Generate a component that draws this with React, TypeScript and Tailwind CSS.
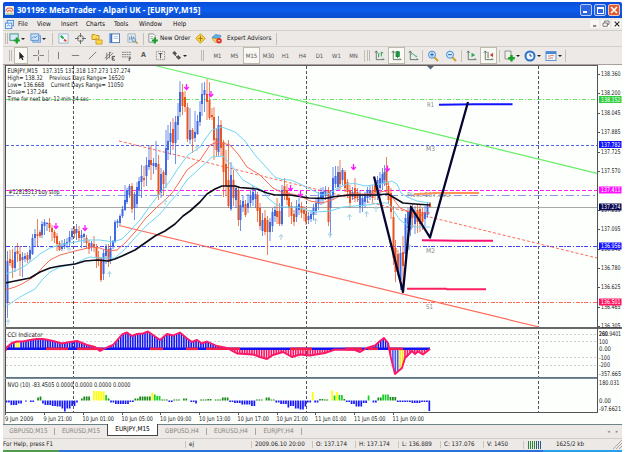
import React from "react";

type Candle = [number, number, number, number, number, number];

// x, high, low, body top, body bottom, 1 = bullish
const candles: Candle[] = [
  [7.5, 251, 318, 261, 303, 1], [10, 250, 266, 259, 263, 0], [12.5, 249, 278, 260, 268, 0], [15, 246, 272, 252, 268, 1],
  [17.5, 243, 262, 251, 254, 0], [20, 246, 276, 254, 261, 0], [22.5, 252, 277, 257, 260, 1], [25, 253, 262, 256, 259, 1],
  [27.5, 252, 263, 255, 260, 0], [30, 247, 262, 250, 259, 1], [32.5, 234, 255, 238, 254, 1], [35, 229, 246, 234, 238, 1],
  [37.5, 219, 246, 234, 236, 0], [40, 230, 238, 232, 236, 0], [42, 221, 238, 224, 235, 1], [44.5, 219, 235, 222, 226, 1],
  [47, 222, 231, 223, 224, 1], [49.5, 218, 232, 223, 228, 0], [52, 225, 241, 228, 232, 0], [54.5, 230, 243, 232, 238, 0],
  [57, 233, 251, 236, 244, 0], [59.5, 241, 251, 243, 250, 0], [62, 240, 251, 246, 249, 1], [64.5, 239, 249, 243, 247, 1],
  [67, 238, 248, 242, 244, 1], [69.5, 231, 246, 237, 242, 1], [72, 228, 240, 231, 237, 1], [74.5, 226, 238, 229, 234, 0],
  [76.5, 224, 240, 229, 233, 1], [79, 226, 241, 231, 238, 0], [81.5, 230, 248, 235, 238, 1], [84, 233, 243, 234, 237, 1],
  [86.5, 235, 249, 238, 243, 0], [89, 240, 254, 243, 249, 0], [91.5, 241, 251, 243, 247, 1], [94, 236, 252, 244, 247, 0],
  [96.5, 244, 268, 247, 258, 0], [98.5, 251, 266, 257, 260, 0], [101, 257, 282, 258, 280, 0], [103.5, 249, 280, 253, 274, 1],
  [106, 244, 264, 247, 256, 1], [108.5, 244, 267, 249, 262, 0], [110.5, 236, 264, 248, 261, 1], [113, 240, 249, 241, 247, 1],
  [115, 220, 243, 222, 242, 1], [117.5, 219, 228, 221, 223, 1], [120, 214, 225, 216, 223, 1], [122.5, 206, 218, 209, 216, 1],
  [125, 185, 211, 200, 210, 1], [127, 188, 204, 190, 202, 1], [129.5, 184, 198, 186, 195, 1], [132, 183, 213, 186, 209, 0],
  [134.5, 192, 220, 194, 208, 1], [137, 182, 208, 187, 204, 1], [139, 177, 196, 181, 190, 1], [141.5, 165, 198, 176, 182, 1],
  [144, 166, 187, 178, 180, 0], [146.5, 157, 186, 165, 176, 1], [149, 145, 170, 160, 167, 1], [151, 145, 180, 160, 165, 0],
  [153.5, 158, 174, 163, 166, 1], [156, 141, 170, 163, 167, 1], [158.5, 155, 200, 164, 195, 0], [161, 168, 198, 174, 193, 1],
  [163.5, 170, 196, 172, 184, 0], [166, 130, 188, 148, 175, 1], [168, 125, 160, 141, 150, 1], [170.5, 122, 155, 133, 142, 1],
  [173, 118, 150, 129, 143, 0], [175.5, 116, 164, 122, 143, 1], [178, 103, 140, 116, 125, 1], [180, 81, 117, 92, 112, 1],
  [182.5, 84, 115, 92, 106, 0], [185, 91, 112, 97, 107, 0], [187.5, 103, 142, 107, 139, 0], [190, 108, 144, 130, 140, 1],
  [192.5, 128, 153, 130, 139, 0], [195, 111, 142, 132, 138, 1], [197.5, 115, 135, 121, 134, 1], [200, 101, 126, 112, 122, 1],
  [202, 83, 116, 94, 104, 1], [204.5, 82, 112, 90, 95, 1], [207, 79, 120, 94, 102, 0], [209.5, 82, 120, 100, 118, 0],
  [212, 108, 120, 115, 117, 0], [214, 107, 160, 117, 140, 0], [216.5, 128, 157, 138, 150, 0], [218.5, 116, 156, 125, 152, 1],
  [221, 120, 156, 125, 148, 0], [223.5, 140, 197, 142, 172, 0], [226, 150, 196, 164, 186, 0], [228.5, 140, 208, 180, 206, 0],
  [231, 162, 211, 175, 209, 1], [233.5, 170, 206, 180, 198, 0], [236, 185, 208, 188, 200, 1], [238.5, 186, 226, 190, 220, 0],
  [240.5, 200, 231, 205, 220, 1], [243, 195, 212, 201, 207, 1], [245.5, 200, 217, 204, 215, 0], [248, 194, 213, 203, 208, 1],
  [250.5, 190, 207, 196, 203, 1], [253, 186, 206, 192, 200, 1], [255.5, 190, 208, 194, 199, 1], [257.5, 192, 222, 195, 211, 0],
  [260, 203, 230, 208, 226, 0], [262.5, 213, 236, 220, 231, 1], [265, 210, 235, 218, 232, 0], [267.5, 216, 255, 220, 232, 0],
  [270, 218, 241, 222, 232, 1], [272.5, 208, 232, 212, 226, 1], [275, 206, 222, 210, 216, 1], [277, 198, 224, 211, 217, 0],
  [279.5, 203, 226, 211, 224, 0], [282, 185, 226, 190, 224, 1], [284.5, 178, 200, 186, 196, 0], [287, 184, 205, 190, 200, 0],
  [289, 192, 217, 198, 208, 0], [291.5, 202, 224, 206, 216, 0], [294, 210, 226, 214, 222, 0], [296.5, 200, 222, 206, 217, 1],
  [299, 198, 215, 204, 210, 1], [301.5, 202, 218, 206, 213, 0], [304, 206, 221, 210, 214, 0], [306, 208, 225, 214, 222, 0],
  [308.5, 212, 224, 216, 220, 1], [311, 210, 222, 214, 219, 1], [313.5, 204, 220, 208, 215, 1], [316, 198, 215, 203, 211, 1],
  [318.5, 192, 210, 197, 204, 1], [321, 188, 205, 192, 198, 1], [323, 187, 204, 192, 199, 1], [325.5, 186, 200, 191, 196, 1],
  [328.5, 187, 226, 190, 222, 0], [330.5, 190, 236, 196, 208, 1], [333, 167, 200, 178, 195, 1], [335.5, 166, 188, 176, 184, 1],
  [338, 166, 190, 172, 187, 1], [340, 160, 190, 172, 184, 0], [342.5, 168, 185, 170, 180, 1], [345, 170, 192, 172, 188, 0],
  [347.5, 179, 198, 182, 192, 0], [350, 185, 208, 190, 203, 0], [352.5, 187, 200, 192, 197, 1], [355, 178, 202, 188, 198, 0],
  [357.5, 188, 202, 192, 198, 0], [360, 190, 213, 194, 207, 1], [362.5, 196, 212, 198, 206, 1], [365, 192, 208, 196, 202, 1],
  [367.5, 187, 203, 190, 198, 1], [370, 186, 200, 190, 197, 1], [372.5, 185, 202, 190, 198, 0], [375, 180, 200, 184, 192, 0],
  [377.5, 176, 200, 180, 195, 1], [380, 172, 195, 178, 188, 1], [382.5, 168, 190, 174, 184, 1], [384.5, 165, 186, 172, 180, 1],
  [386.5, 157, 192, 170, 185, 0], [388.5, 182, 204, 186, 200, 0], [391, 188, 219, 193, 212, 0], [393.5, 206, 265, 217, 258, 0],
  [395.5, 240, 282, 248, 272, 0], [398, 250, 276, 254, 270, 0], [400.5, 246, 290, 253, 280, 1], [403, 236, 286, 252, 266, 0],
  [405.5, 214, 262, 218, 254, 1], [408, 208, 250, 212, 228, 1], [410.5, 205, 236, 212, 230, 1], [412.5, 204, 228, 210, 218, 0],
  [415, 206, 234, 213, 224, 1], [417.5, 204, 233, 210, 222, 0], [420, 204, 232, 209, 224, 0], [422.5, 208, 230, 212, 222, 0],
  [425, 206, 226, 212, 219, 1], [427.5, 202, 218, 206, 215, 1], [430, 202, 208, 203, 207, 0],
];

const levels = [
  { y: 99.5, color: "#62e862", dash: "4 2 1 2" },
  { y: 145.5, color: "#5068e8", dash: "3 2" },
  { y: 190.5, color: "#ff20f0", dash: "4 2" },
  { y: 195.5, color: "#8898e8", dash: "8 3 2 3" },
  { y: 246.5, color: "#4444f4", dash: "4 1.5 1.5 1.5" },
  { y: 302.5, color: "#ff6a5a", dash: "4 1.5 1.5 1.5" },
];

const prices: [string, number][] = [
  ["138.360", 74], ["138.200", 93], ["138.045", 113], ["137.885", 132], ["137.725", 151.5], ["137.570", 171],
  ["137.255", 210], ["137.095", 229], ["136.940", 249], ["136.780", 268], ["136.625", 287], ["136.465", 306.5], ["136.305", 326],
];

const tags: [string, number, string][] = [
  ["138.152", 99.5, "#30d040"], ["137.782", 144.5, "#1414ff"], ["137.411", 190, "#ff10ff"],
  ["137.274", 207, "#080850"], ["136.956", 246, "#1414ff"], ["136.501", 302, "#ff1464"],
];

const times: [string, number][] = [
  ["9 Jun 2009", 5], ["9 Jun 21:00", 43.5], ["10 Jun 01:00", 82.5], ["10 Jun 05:00", 121.5], ["10 Jun 09:00", 160],
  ["10 Jun 13:00", 199], ["10 Jun 17:00", 237.5], ["10 Jun 21:00", 276.5], ["11 Jun 01:00", 315], ["11 Jun 05:00", 354], ["11 Jun 09:00", 392.5],
];

const sells = [[56, 226], [85, 228], [186.5, 87], [211, 94], [290.5, 188], [300.5, 194], [353.5, 167], [387.5, 168.5]];
const buys = [[8, 322], [69, 250], [109.5, 274], [197, 148], [165, 202], [281, 237], [315.5, 221], [330, 235], [349.5, 217], [366.5, 214], [376, 209], [409.5, 247]];

const upperBand = "5,274 15,271 25,266 40,254 50,248 60,245 70,243 85,240 100,240 113,242 122,239 130,231 140,220 150,206 160,193 170,181 179,167 188,155 200,147 206,138 212,130 222,127 235,132 245,141 255,155 265,166 275,177 282,179.5 291,180 300,184 312,190 322,195 330,193 338,188 347,184 355,183.5 365,186 380,184 392,181 397,184 401,193 407,197 417,201 430,203";
const lowerBand = "5,307 20,297 35,289 42,280 50,272 60,267 75,264 84,259 90,257 100,258 115,258 125,249 133,240 147,225 160,214 170,202 178,193 187,180 200,168 212,157 223,156 233,167 243,180 257,188 262,190 268,198 275,204 283,207 297,207 310,211 317,212 330,211 343,207 367,205 380,203 388,203 393,210 400,220 407,225 417,227 430,227";
const midBand = "5,290 15,287 22,284 35,276 42,268 50,260 60,255 75,251 92,247 100,248 108,251 117,250 125,243 135,232 145,219 158,206 165,200 172,193 180,181 187,170 200,160 210,145 218,142 230,145 238,154 247,167 260,175 273,188 283,193 292,194 300,196 310,201 322,203 332,200 340,196 350,194 370,194 385,191 392,197 400,208 412,213 430,213";
const slowMa = "5,283 20,280 30,278 40,272 50,268 60,266 75,264 85,261 97,260 108,261 115,259 122,256 135,250 145,243 155,236 165,231 175,224 183,216 190,211 200,202 207,194 215,189 222,186 235,186 240,187.5 257,189 267,193 275,195 290,195 309,198 325,198.5 335,196.5 350,195 375,195 388,194 393,197 403,203 415,204 430,205";

const cci: [number, number][] = [
  [5.5, 351], [7, 347], [12, 343], [17, 341.5], [23, 341.5], [30, 340], [37, 339], [43, 339], [53, 341], [62, 343.5], [70, 342], [77, 341], [87, 345],
  [95, 347], [100, 351], [108, 347], [113, 345], [122, 334.5], [127, 332.5], [132, 336], [137, 334], [143, 333.5], [148, 331.5], [153, 335], [160, 340], [167, 334],
  [173, 335.5], [180, 332.5], [187, 338.5], [192, 342], [197, 340], [202, 343.5], [207, 341.5], [217, 346], [227, 348], [237, 353.5], [253, 354.5],
  [260, 357], [267, 359], [273, 355], [283, 352], [292, 357], [300, 354.5], [310, 355.5], [325, 353], [335, 349.5], [355, 350], [360, 352], [367, 348],
  [375, 345.5], [380, 341], [384, 338], [388, 343], [391, 358], [395, 374], [402, 368], [405, 358], [412, 351], [415, 354], [418, 351.5], [423, 354.5], [430, 349],
];

const nvo: [number, number, number][] = [
  [5, 11, -2], [11, 17, -4.5], [17, 23, -3], [24, 26, -1], [29, 34, -1.5], [36, 38, 3], [38, 41, 4], [42, 45, -3], [45, 50, -4.5], [50, 55, -5.5],
  [55, 60, -6], [60, 63, -8], [63, 65, -11], [65, 70, -8], [70, 75, -5.5], [75, 77, -2], [80, 82, 2], [83, 89, 4], [89, 91, 7.5], [94, 99, 9.5], [100, 104, 9],
  [104, 106, 5.5], [106, 110, 2], [110, 114, -2], [114, 130, -3.5], [130, 133, -1.5], [134, 138, 2], [138, 150, 4], [150, 153, 8], [153, 156, 6],
  [156, 160, 4.5], [161, 168, 1], [169, 173, -1.5], [174, 180, 1], [182, 188, 2], [190, 195, -1.5], [195, 198, -3], [199, 207, 1], [208, 211, 1.5],
  [215, 221, 1], [222, 228, 3], [229, 233, -1.5], [233, 240, -2.5], [240, 250, -4], [250, 256, -5.5], [257, 262, 1], [265, 269, 3], [270, 274, 1],
  [275, 280, -2], [280, 286, -3.5], [286, 290, -7], [290, 295, -5.5], [295, 300, -8], [300, 305, -9], [305, 307, -6], [308, 311, -2], [312, 314, 8.5],
  [315, 318, -2], [318, 323, 1.5], [325, 328, 1], [327, 329, 7], [330, 334, 10], [334, 336, 5], [337, 339, 8.5], [339, 342, 5.5], [342, 346, 1.5], [346, 351, -1.5],
  [351, 356, -3.5], [356, 361, -6], [362, 366, -2.5], [366, 368, 1.5], [368, 370, 5], [372, 376, -2], [378, 382, 3], [382, 390, 6], [390, 396, 3.5],
  [397, 412, -1.5], [412, 420, -2.5], [420, 427, -1.5], [429, 431, -10.5],
];

const band: [number, number][] = [[46, 68], [77, 103], [150, 163], [186, 198], [206, 240], [290, 312], [345, 362], [368, 378], [388, 403]];

const cciAt = (x: number) => {
  const i = Math.max(1, cci.findIndex(([px]) => px >= x));
  const [x0, y0] = cci[i - 1];
  const [x1, y1] = cci[i];
  return y0 + ((x - x0) / (x1 - x0)) * (y1 - y0);
};

const cciColor = (x: number, y: number) => {
  if (y < 349) return x > 15 && x < 19 ? "#ffff00" : "#1414f0";
  if (y > 360) return x > 399 && x < 403 ? "#ffee00" : "#4a5af0";
  return "#ff1464";
};

const nvoColor = (x: number, h: number) => {
  if (h < 0) return "#1818ff";
  if (h > 7) return "#ffff00";
  return h > 4.2 ? "#10d020" : "#188818";
};

const bars = Array.from({ length: 175 }, (_, i) => 6.5 + i * 2.43);

function Label({ x, y, w, fill = "#222222", children }: { x: number; y: number; w?: number; fill?: string; children: string }) {
  return (
    <text x={x} y={y} fill={fill} textLength={w} lengthAdjust="spacingAndGlyphs" xmlSpace="preserve" className="font-['DejaVu_Sans',sans-serif] text-[6.4px]">
      {children}
    </text>
  );
}

function Chart() {
  return (
    <svg viewBox="3 64 619 360" className="block h-[360px] w-[619px] shrink-0 bg-[#fdfffd]">
      <g shapeRendering="crispEdges">
        <path d="M3 64h2v360h-2z" fill="#c9c6c0" />
        <path d="M73.5 66V412M306.5 66V412M538.5 66V412" stroke="#4c5260" strokeDasharray="3 2" fill="none" />
        {levels.map((l) => (
          <path key={l.y} d={`M6 ${l.y}H597`} stroke={l.color} strokeDasharray={l.dash} />
        ))}
        <path d="M6 207.5H597" stroke="#a8a8a8" />
      </g>

      <Label x={427} y={106.5} w={7} fill="#8a8a8a">R1</Label>
      <Label x={426} y={151} w={9} fill="#8a8a8a">M3</Label>
      <Label x={426} y={252.5} w={9} fill="#8a8a8a">M2</Label>
      <Label x={426} y={308.5} w={7} fill="#8a8a8a">S1</Label>
      <Label x={407} y={197} w={43} fill="#8a8a7a">Pivot 137.390</Label>

      <g fill="none">
        <path d="M153 65L597 173.3" stroke="#66ee66" strokeWidth="1.2" />
        <path d="M119 141L597 258" stroke="#ff6a5a" strokeDasharray="3 2" />
        <path d="M119 225.5L539 327" stroke="#ff6a5a" strokeWidth="1.2" />
      </g>

      {candles.map(([x, hi, lo, top, bottom, up]) => (
        <g key={x} fill={up ? "#4169e1" : "#ea5420"}>
          <rect x={x - 0.5} y={hi} width="1" height={lo - hi} opacity="0.75" />
          <rect x={x - 1} y={top} width="2" height={bottom - top} />
        </g>
      ))}

      <g fill="none" strokeLinejoin="round">
        <polyline points={upperBand} stroke="#72d4f4" />
        <polyline points={lowerBand} stroke="#72d4f4" />
        <polyline points={midBand} stroke="#fa6a58" />
        <polyline points={slowMa} stroke="#0c0c1c" strokeWidth="1.7" />
      </g>

      {sells.map(([x, y]) => (
        <path key={x} d={`M${x} ${y - 3}v5.4M${x - 2.2} ${y}l2.2 2.6 2.2-2.6`} stroke="#ff14ff" strokeWidth="1.3" fill="none" />
      ))}
      {buys.map(([x, y]) => (
        <path key={x} d={`M${x} ${y + 3}v-5.4M${x - 2} ${y}l2-2.4 2 2.4`} stroke="#a9cfe0" fill="none" />
      ))}

      <g fill="none">
        <path d="M414 194.3L438 193H479" stroke="#ff9458" strokeWidth="2" />
        <path d="M439 104.8L475 104.2H512.500" stroke="#1212ff" strokeWidth="2" />
        <path d="M422 240.3L457 240.7H493" stroke="#fc1070" strokeWidth="2" />
        <path d="M407 288.700H446L447 289.300H486" stroke="#fc2060" strokeWidth="2" />
        <path d="M374 176.500L403 292L411 207L430 237.500L468 102" stroke="#060630" strokeWidth="2.3" strokeLinejoin="round" />
      </g>
      <path d="M427 66h7l-3.500 3.500z" fill="#5c6c7c" />

      <Label x={7.5} y={73} w={123}>EURJPY,M15   137.315 137.318 137.273 137.274</Label>
      <Label x={7.5} y={79.5} w={117}>High= 138.32    Previous Days Range= 16520</Label>
      <Label x={7.5} y={86.500} w={116}>Low= 136.668    Current Days Range= 11050</Label>
      <Label x={7.5} y={93.500} w={40}>Close= 137.244</Label>
      <Label x={7.5} y={100.500} w={81}>Time for next bar: 12 min 24 sec</Label>
      <Label x={8.5} y={194} w={51}>#12815513 buy stop</Label>

      {/* CCI */}
      <g shapeRendering="crispEdges">
        <path d="M6 334.500H597M6 341.500H597M6 357.500H597M6 365.500H597" stroke="#d0d0d0" strokeDasharray="2 2" />
      </g>
      {bars.map((x) => {
        const y = cciAt(Math.min(x, 429.9));
        return <rect key={x} x={x - 0.8} y={Math.min(y, 349)} width="1.600" height={Math.abs(y - 349)} fill={cciColor(x, y)} />;
      })}
      <path d="M5.500 348.800H430" stroke="#1414f0" strokeWidth="2.600" />
      {band.map(([a, b]) => (
        <path key={a} d={`M${a} 348.800H${b}`} stroke="#f4204c" strokeWidth="2.600" />
      ))}
      <polyline points={cci.map((p) => p.join(",")).join(" ")} fill="none" stroke="#fa1868" strokeWidth="1.900" strokeLinejoin="round" />
      <Label x={7.5} y={336.500} w={35}>CCI Indicator</Label>

      {/* NVO */}
      {bars.map((x) => {
        const hit = nvo.find(([a, b]) => x >= a - 0.3 && x < b + 0.3);
        if (!hit) return null;
        const h = hit[2];
        return <rect key={x} x={x - 0.85} y={h > 0 ? 400.5 - h : 400.5} width="1.700" height={Math.abs(h)} fill={nvoColor(x, h)} />;
      })}
      <Label x={7.5} y={387} w={123}>NVO (10) -83.4505 0.0000 0.0000 0.0000 0.0000</Label>

      {/* frame, separators and scale */}
      <g shapeRendering="crispEdges" fill="none">
        <path d="M3 64.500H622" stroke="#a9a09c" />
        <path d="M5 65.500H598" stroke="#645c64" />
        <path d="M5.500 65V412" stroke="#4c4c58" />
        <path d="M5 328H622" stroke="#686868" strokeWidth="2" />
        <path d="M5 377.500H598" stroke="#5c7484" strokeWidth="1" />
        <path d="M5 378.500H598" stroke="#7c8c94" strokeWidth="1" />
        <path d="M5 412.500H598M597.500 65V413" stroke="#505458" />
        {prices.map(([p, y]) => <path key={p} d={`M598 ${Math.round(y)}.5h2`} stroke="#505458" />)}
        {times.map(([t, x]) => <path key={t} d={`M${Math.round(x)}.5 413v2`} stroke="#505458" />)}
      </g>
      {prices.map(([p, y]) => <Label key={p} x={601} y={y + 2.3} w={19.500}>{p}</Label>)}
      {tags.map(([p, y, color]) => (
        <g key={p}>
          <rect x="599" y={y - 3.5} width="22.500" height="7" fill={color} />
          <Label x={601} y={y + 2.300} w={19.500} fill="#ffffff">{p}</Label>
        </g>
      ))}
      <Label x={599} y={336} w={22}>260.9401</Label>
      <Label x={599} y={336} w={9}>200</Label>
      <Label x={599} y={344} w={9}>100</Label>
      <Label x={599} y={351.300} w={12}>0.00</Label>
      <Label x={599} y={359.500} w={11}>-100</Label>
      <Label x={599} y={367.300} w={11}>-200</Label>
      <Label x={599} y={375.500} w={22}>-357.665</Label>
      <Label x={599} y={385} w={20.500}>180.031</Label>
      <Label x={599} y={402.800} w={12}>0.00</Label>
      <Label x={599} y={411} w={22}>-97.6621</Label>
      {times.map(([t, x]) => <Label key={t} x={x} y={420.800} w={t.length > 11 ? 31.5 : 28.5}>{t}</Label>)}
    </svg>
  );
}

function Slot({ className = "w-[17px]", children }: { className?: string; children?: React.ReactNode }) {
  return <div className={`flex h-full shrink-0 items-center justify-center ${className}`}>{children}</div>;
}

function Glyph({ children, size = 11 }: { children: React.ReactNode; size?: number }) {
  return (
    <svg viewBox="0 0 12 12" width={size} height={size} fill="none" stroke="#777777" strokeWidth="1" className="shrink-0">
      {children}
    </svg>
  );
}

const Caret = () => <div className="mx-px h-0 w-0 shrink-0 border-x-2 border-t-2 border-x-transparent border-t-[#222222]" />;
const Sep = () => <div className="h-[12px] w-px shrink-0 bg-[#c4c1b8]" />;
const Grip = () => <div className="h-[11px] w-[3px] shrink-0 border-x border-[#bdbab2]" />;

const plus = <path d="M8.500 5v6.500M5.200 8.200h6.600" stroke="#18a028" strokeWidth="2.400" />;

function TopToolbar() {
  return (
    <div className="flex h-[16px] shrink-0 items-center border-b border-[#d2cfc8] pl-[2px] text-[6.6px] text-[#111111]">
      <Grip />
      <Slot className="w-[18px]">
        <Glyph><rect x="1" y="1" width="9" height="7" fill="#d8ecff" stroke="#3c8c78" />{plus}</Glyph>
        <Caret />
      </Slot>
      <Slot className="w-[25px]">
        <Glyph><rect x="3" y="3" width="8.500" height="7" fill="#b8d4f4" stroke="#6c9cd4" /><rect x="1" y="1" width="8.500" height="7" fill="#cfe4fa" stroke="#5c90cc" /><path d="M2 6l2-2 2 1 2-2" stroke="#4080c0" /></Glyph>
        <Caret />
      </Slot>
      <Slot className="w-[3px]"><Sep /></Slot>
      <Slot className="w-[19px]"><Glyph><rect x="1" y="1" width="10" height="10" fill="#f4faff" stroke="#98b8cc" /><path d="M3 3l3 3" stroke="#18a848" strokeWidth="2" /><path d="M6.500 7l2.500 2" stroke="#e04830" strokeWidth="2" /></Glyph></Slot>
      <Slot className="w-[15px]"><Glyph><circle cx="6" cy="6" r="3.300" stroke="#666666" /><path d="M6 0v4.500M6 7.500V12M0 6h4.500M7.500 6H12" stroke="#666666" /></Glyph></Slot>
      <Slot className="w-[18px]"><Glyph size={12}><path d="M1 1.500h3l1 1h3v4H1z" fill="#f8dc60" stroke="#c89820" /><path d="M5 5l1.500 2H11v4H5z" fill="#ffd84c" stroke="#d0a020" /></Glyph></Slot>
      <Slot className="w-[17px]"><Glyph><rect x="1" y="1" width="10.500" height="9.500" fill="#ffffff" stroke="#4878b8" /><path d="M2.500 1v9" stroke="#3870c8" strokeWidth="2" /><path d="M5 4h5M5 6h5" stroke="#a8c4e4" /></Glyph></Slot>
      <Slot className="w-[18px]"><Glyph><path d="M1 1h8v9H1z" fill="#e8eef4" stroke="#9cb0c0" /><path d="M3 8V4M5 7V3M7 8V4" stroke="#6080a0" /><circle cx="7.500" cy="7.500" r="2" fill="#b8e0f8" stroke="#6090c0" /><path d="M9 9l2.500 2.500" stroke="#c09030" strokeWidth="1.500" /></Glyph></Slot>
      <Slot className="w-[4px]"><Sep /></Slot>
      <Slot className="w-[14px]"><Glyph><path d="M2 1h5l2 2v7H2z" fill="#ffffff" stroke="#7c8c84" /><path d="M3.500 4h3M3.500 6h3" stroke="#a0a8a0" />{plus}</Glyph></Slot>
      <span className="w-[35px] shrink-0 whitespace-nowrap pl-px text-[6.3px]">New Order</span>
      <Slot className="w-[12px]"><Glyph><path d="M6 .8L11.200 6 6 11.200.8 6z" fill="#f8d44c" stroke="#c89820" /><path d="M6 3v6M3.500 6h5" stroke="#a87810" /></Glyph></Slot>
      <Slot className="w-[21px]"><Glyph><path d="M1 5l4-3.500 6 1.500-2 3z" fill="#5cb4e8" stroke="#3878b8" strokeWidth=".7" /><path d="M1.500 6c1 4 4 5 7 4V6z" fill="#f0d068" stroke="#b89030" strokeWidth=".7" /><circle cx="8.800" cy="8.500" r="3" fill="#e03028" stroke="none" /><path d="M7.600 8.500H10" stroke="#ffffff" /></Glyph></Slot>
      <span className="w-[49px] shrink-0 whitespace-nowrap text-[6.3px]">Expert Advisors</span>
      <Sep />
    </div>
  );
}

const periods = ["M1", "M5", "M15", "M30", "H1", "H4", "D1", "W1", "MN"];
const pressed = "border border-[#bdbab0] bg-[#faf9f4]";

function Axes({ children }: { children?: React.ReactNode }) {
  return <Glyph><path d="M2.500 1v9.500H11M1 3l1.500-2L4 3M9.500 9l1.500 1.500" stroke="#5c7468" />{children}</Glyph>;
}

function BottomToolbar() {
  return (
    <div className="flex h-[17px] shrink-0 items-center pl-[6px] text-[6px] text-[#555555]">
      <Grip />
      <Slot className={`ml-[2px] w-[14px] ${pressed}`}><Glyph size={10}><path d="M4 1v9l2-2 1.500 3 1.500-.8L7.500 7.500H10z" fill="#222222" stroke="none" /></Glyph></Slot>
      <Slot className="w-[20px]"><Glyph><path d="M6 0v5M6 7v5M0 6h5M7 6h5" /></Glyph></Slot>
      <Sep />
      <Slot className="w-[18px]"><Glyph><path d="M6 2v8" /></Glyph></Slot>
      <Slot><Glyph><path d="M2 6h8" /></Glyph></Slot>
      <Slot><Glyph><path d="M2 10l8-8" /></Glyph></Slot>
      <Slot><Glyph><path d="M1 9l7-7M2 11l8-8M3 3v7M6 2v7" /><path d="M9 7h3M9 9h2M9 7v4h3" stroke="#444444" /></Glyph></Slot>
      <Slot><Glyph><path d="M1 2.500h10M1 5h10M1 7.500h10" strokeDasharray="2 .6" /><path d="M9 8v4M9 9h2" stroke="#444444" /></Glyph></Slot>
      <Slot><span className="text-[7px] font-bold">A</span></Slot>
      <Slot><Glyph><rect x="1.500" y="1.500" width="9" height="9" strokeDasharray="1 1" /><path d="M4 4h4M6 4v5" stroke="#444444" /></Glyph></Slot>
      <Slot className="w-[20px]"><Glyph><path d="M2 3l2-1.500L6 4 4 5.500zM6 8l2-2 2.500 2.500-2 1.500zM4 5l3 3" fill="#555555" stroke="#555555" /></Glyph><Caret /></Slot>
      <div className="w-[9px]" />
      <Slot className="mr-[2px] w-[9px]"><Grip /></Slot>
      {periods.map((p) => (
        <Slot key={p} className={p === "M15" ? `w-[17px] ${pressed}` : "w-[17px]"}>{p}</Slot>
      ))}
      <Slot className="w-[4px]"><Sep /></Slot>
      <Slot className="w-[5px]"><Grip /></Slot>
      <Slot><Axes><path d="M5 8V4h1M8 7V2M8 3h2" stroke="#18984c" /></Axes></Slot>
      <Slot className={`w-[17px] ${pressed}`}><Axes><rect x="5.500" y="2" width="3.500" height="5" fill="#20b848" stroke="#18803c" /><path d="M7.200 1v8" stroke="#18803c" /></Axes></Slot>
      <Slot><Axes><path d="M3 5c3-3 3 2 7 2" stroke="#18984c" /></Axes></Slot>
      <Sep />
      <Slot className="w-[20px]"><Glyph size={12}><circle cx="5" cy="4.700" r="3.500" fill="#d4ecff" stroke="#4888cc" /><path d="M3 4.700h4M5 2.700v4" stroke="#2868b8" /><path d="M7.500 7.500l3.500 3.500" stroke="#d0a030" strokeWidth="2" /></Glyph></Slot>
      <Slot className="w-[16px]"><Glyph size={12}><circle cx="5" cy="4.700" r="3.500" fill="#d4ecff" stroke="#4888cc" /><path d="M3 4.700h4" stroke="#2868b8" /><path d="M7.500 7.500l3.500 3.500" stroke="#d0a030" strokeWidth="2" /></Glyph></Slot>
      <Slot className="w-[4px]"><Sep /></Slot>
      <Slot><Axes><path d="M6 3l4 2.500L6 8z" fill="#20b048" stroke="none" /></Axes></Slot>
      <Slot className={`w-[17px] ${pressed}`}><Axes><path d="M5.500 2v7" stroke="#606060" /><path d="M11 3L7.500 5.500 11 8z" fill="#c04030" stroke="none" /></Axes></Slot>
      <Slot className="w-[5px]"><Sep /></Slot>
      <Slot className="w-[20px]"><Glyph size={12}><path d="M2 1h6v8H2z" fill="#f0f0e8" stroke="#8c948c" />{plus}</Glyph><Caret /></Slot>
      <Slot className="w-[21px]"><Glyph size={12}><circle cx="6" cy="6" r="4.500" fill="#f0f8ff" stroke="#2870c8" strokeWidth="2" /><path d="M6 3.500V6h2" stroke="#345080" /></Glyph><Caret /></Slot>
      <Slot className="w-[22px]"><Glyph size={12}><rect x="1" y="1.500" width="10" height="9" fill="#f4faff" stroke="#5c94d4" /><path d="M1 3h10" stroke="#4888d8" strokeWidth="2" /><path d="M3 6h2l2-1 2 1M3 9l2-1h3" stroke="#d08060" /></Glyph><Caret /></Slot>
      <Sep />
    </div>
  );
}

const menus: [string, string][] = [
  ["File", "w-[19px]"], ["View", "w-[24px]"], ["Insert", "w-[25px]"], ["Charts", "w-[28px]"], ["Tools", "w-[25px]"], ["Window", "w-[34px]"], ["Help", "w-[20px]"],
];

const tabs: [string, string][] = [
  ["GBPUSD,M15", "w-[52px] border-r"], ["EURUSD,M15", "w-[52px]"], ["EURJPY,M15", ""], ["GBPUSD,H4", "w-[49px] border-r"], ["EURUSD,H4", "w-[49px] border-r"], ["EURJPY,H4", "w-[46px] border-r"],
];

const quotes: [string, string][] = [["O: 137.174", "w-[43px]"], ["H: 137.174", "w-[43px]"], ["L: 136.889", "w-[42px]"], ["C: 137.076", "w-[43px]"], ["V: 1450", "w-[40px]"]];

export default function App() {
  return (
    <div className="flex h-[452px] w-[625px] flex-col overflow-hidden bg-white px-[3px] pt-[2px] font-['DejaVu_Sans_Condensed','DejaVu_Sans',sans-serif] leading-none">
      <div className="flex h-[16px] w-[619px] shrink-0 items-center rounded-t-[2px] bg-linear-to-b from-[#0a4cd8] via-[#0c5cec] to-[#0a4ccc] pl-[2px] pr-[2px]">
        <svg viewBox="0 0 10 10" className="mr-[3px] h-[9px] w-[9px]">
          <rect width="10" height="10" rx="1" fill="#f6ece0" />
          <path d="M1 6c0-5 8-5 8 0M3 7c0-3 4-3 4 0" fill="none" stroke="#e06850" strokeWidth="1.300" />
          <path d="M1 9h8" stroke="#60b070" />
        </svg>
        <span className="whitespace-nowrap font-['Open_Sans',sans-serif] text-[8px] font-bold tracking-[0.02px] text-white">
          301199: MetaTrader - Alpari UK - [EURJPY,M15]
        </span>
        <div className="ml-auto flex gap-[2px]">
          <div className="flex h-[12px] w-[12px] items-end rounded-[2px] border border-[#b8ccf8] bg-[#2c64e4] p-[2px]"><div className="h-[2px] w-[4px] bg-white" /></div>
          <div className="flex h-[12px] w-[12px] items-center justify-center rounded-[2px] border border-[#b8ccf8] bg-[#2c64e4]"><div className="h-[7px] w-[7px] border border-t-2 border-white" /></div>
          <div className="flex h-[12px] w-[12px] items-center justify-center rounded-[2px] border border-[#f0c8b8] bg-[#e05c30]">
            <svg viewBox="0 0 8 8" className="h-[8px] w-[8px]"><path d="M1 1l6 6M7 1L1 7" stroke="#ffffff" strokeWidth="1.600" /></svg>
          </div>
        </div>
      </div>

      <div className="flex h-[46px] w-[619px] shrink-0 flex-col bg-[#ece9e7]">
        <div className="flex h-[13px] shrink-0 items-center border-b border-[#d2cfc8] pl-[2px] text-[6.5px] text-[#111111]">
          <svg viewBox="0 0 10 10" className="mr-[4px] h-[9px] w-[9px]">
            <rect x="2.500" y=".5" width="7" height="6" fill="#dcecff" stroke="#4c8cd8" />
            <rect x=".5" y="3.500" width="7" height="6" fill="#f0f8ff" stroke="#4c8cd8" />
            <path d="M2 7l2-1.500L6 7" fill="none" stroke="#3c80d0" />
          </svg>
          {menus.map(([name, w]) => <span key={name} className={`shrink-0 ${w}`}>{name}</span>)}
          <div className="ml-auto flex items-center gap-[2px] pr-[1px]">
            <Slot className="h-[9px] w-[9px] bg-[#f8f7f4]"><Glyph size={8}><path d="M3 9h5" stroke="#222222" strokeWidth="1.500" /></Glyph></Slot>
            <Slot className="h-[9px] w-[9px] bg-[#f8f7f4]"><Glyph size={8}><path d="M4 4V1.500h6.500v5H8M1.500 4.500H8v5H1.500z" stroke="#444444" /></Glyph></Slot>
            <Slot className="h-[9px] w-[9px] bg-[#f8f7f4]"><Glyph size={8}><path d="M2.500 2.500l7 7M9.500 2.500l-7 7" stroke="#222222" strokeWidth="1.600" /></Glyph></Slot>
          </div>
        </div>
        <TopToolbar />
        <BottomToolbar />
      </div>

      <Chart />

      <div className="flex h-[14px] w-[619px] shrink-0 items-stretch border-t border-[#6c8488] bg-[#ece9e7] text-[6.4px] text-[#8c8880]">
        {tabs.map(([name, style]) =>
          name === "EURJPY,M15" ? (
            <div key={name} className="-mt-px mb-[2px] flex w-[51px] shrink-0 items-center justify-center border border-t-0 border-[#444444] bg-white pb-px text-black">{name}</div>
          ) : (
            <div key={name} className={`my-[3px] flex shrink-0 items-center justify-center border-[#aaa69c] ${style}`}>{name}</div>
          ),
        )}
        <div className="ml-auto flex items-center gap-[6px] pr-[4px] text-[5px] text-[#888888]"><span>◂</span><span>▸</span></div>
      </div>

      <div className="flex h-[12px] w-[619px] shrink-0 items-center border-t border-[#d0cdc6] bg-[#ece9e7] text-[6.2px] text-[#222222]">
        <span className="w-[182px] shrink-0">For Help, press F1</span>
        <span className="w-[66px] shrink-0 border-l border-[#cac7be] pl-[3px]">ej</span>
        <span className="w-[61px] shrink-0 whitespace-nowrap border-l border-[#cac7be] pl-[3px]">2009.06.10 20:00</span>
        {quotes.map(([q, w]) => <span key={q} className={`shrink-0 whitespace-nowrap border-l border-[#cac7be] pl-[3px] ${w}`}>{q}</span>)}
        <div className="flex h-[8px] items-stretch gap-px border-l border-[#cac7be] pl-[4px]">
          {[0, 1, 2, 3, 4, 5, 6].map((i) => <div key={i} className={i < 4 ? "w-px bg-[#2c8838]" : "w-px bg-[#285c80]"} />)}
        </div>
        <span className="ml-[15px] whitespace-nowrap">1625/2 kb</span>
        <svg viewBox="0 0 9 9" className="ml-auto h-[9px] w-[9px]"><path d="M0 9l9-9M3 9l6-6M6 9l3-3" stroke="#aca89c" /></svg>
      </div>
      <div className="flex h-[2px] w-[619px] shrink-0">
        <div className="w-[56px] bg-[#4c9c4c]" />
        <div className="flex-1 bg-[#2c70dc]" />
        <div className="w-[79px] bg-[#28a0ec]" />
      </div>
    </div>
  );
}
